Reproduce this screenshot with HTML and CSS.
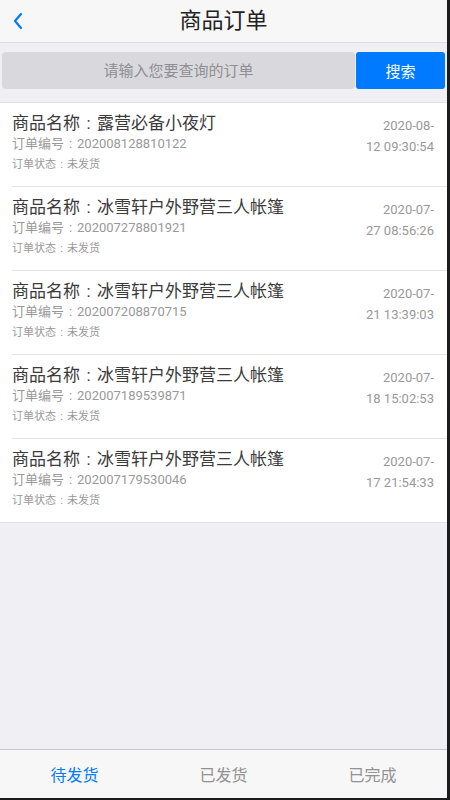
FILE: index.html
```html
<!DOCTYPE html>
<html lang="zh-CN">
<head>
    <meta charset="UTF-8">
    <meta name="viewport" content="width=device-width, initial-scale=1.0">
    <title>商品订单</title>
    <link rel="stylesheet" href="styles.css">
</head>
<body>
    <div id="screen">
        <header class="nav-bar">
            <a class="back" href="#">
                <svg width="12" height="18" viewBox="0 0 12 18"><path d="M9 2 L3 9 L9 16" fill="none" stroke="#007aff" stroke-width="2.2" stroke-linecap="round" stroke-linejoin="round"/></svg>
            </a>
            <h1>商品订单</h1>
        </header>

        <div class="search-bar">
            <input type="text" class="search-input" placeholder="请输入您要查询的订单">
            <button class="search-btn">搜索</button>
        </div>

        <div class="content">
            <ul class="order-list">
                <li class="order-item">
                    <div class="order-info">
                        <div class="order-name">商品名称<span class="colon">:</span>露营必备小夜灯</div>
                        <div class="order-no">订单编号<span class="colon">:</span>202008128810122</div>
                        <div class="order-status">订单状态<span class="colon">:</span>未发货</div>
                    </div>
                    <div class="order-time">2020-08-<br>12 09:30:54</div>
                </li>
                <li class="order-item">
                    <div class="order-info">
                        <div class="order-name">商品名称<span class="colon">:</span>冰雪轩户外野营三人帐篷</div>
                        <div class="order-no">订单编号<span class="colon">:</span>202007278801921</div>
                        <div class="order-status">订单状态<span class="colon">:</span>未发货</div>
                    </div>
                    <div class="order-time">2020-07-<br>27 08:56:26</div>
                </li>
                <li class="order-item">
                    <div class="order-info">
                        <div class="order-name">商品名称<span class="colon">:</span>冰雪轩户外野营三人帐篷</div>
                        <div class="order-no">订单编号<span class="colon">:</span>202007208870715</div>
                        <div class="order-status">订单状态<span class="colon">:</span>未发货</div>
                    </div>
                    <div class="order-time">2020-07-<br>21 13:39:03</div>
                </li>
                <li class="order-item">
                    <div class="order-info">
                        <div class="order-name">商品名称<span class="colon">:</span>冰雪轩户外野营三人帐篷</div>
                        <div class="order-no">订单编号<span class="colon">:</span>202007189539871</div>
                        <div class="order-status">订单状态<span class="colon">:</span>未发货</div>
                    </div>
                    <div class="order-time">2020-07-<br>18 15:02:53</div>
                </li>
                <li class="order-item">
                    <div class="order-info">
                        <div class="order-name">商品名称<span class="colon">:</span>冰雪轩户外野营三人帐篷</div>
                        <div class="order-no">订单编号<span class="colon">:</span>202007179530046</div>
                        <div class="order-status">订单状态<span class="colon">:</span>未发货</div>
                    </div>
                    <div class="order-time">2020-07-<br>17 21:54:33</div>
                </li>
            </ul>
        </div>

        <nav class="tab-bar">
            <a class="tab active" href="#">待发货</a>
            <a class="tab" href="#">已发货</a>
            <a class="tab" href="#">已完成</a>
        </nav>
    </div>
</body>
</html>
```

FILE: styles.css
```css
body {
    margin: 0;
    font-family: Roboto, "Noto Sans CJK SC", sans-serif;
    background-color: #111;
}

#screen {
    width: 450px;
    height: 800px;
    box-sizing: border-box;
    border-right: 3px solid #1c1c1e;
    border-bottom: 2px solid #1c1c1e;
    background-color: #efeff4;
    display: flex;
    flex-direction: column;
}

.nav-bar {
    height: 42px;
    background-color: #f7f7f7;
    border-bottom: 1px solid #dedede;
    display: flex;
    align-items: center;
    justify-content: center;
    position: relative;
    flex-shrink: 0;
}

.nav-bar h1 {
    margin: 0;
    font-size: 22px;
    font-weight: normal;
    color: #222;
    line-height: 1;
}

.back {
    position: absolute;
    left: 12px;
    top: 12px;
    display: flex;
}

.search-bar {
    display: flex;
    gap: 1px;
    padding: 9px 2px 13px 2px;
    border-bottom: 1px solid #e0e0e4;
    flex-shrink: 0;
}

.search-input {
    flex: 1;
    height: 37px;
    border: none;
    border-radius: 4px;
    background-color: #d9d9dd;
    font-family: inherit;
    font-size: 15px;
    text-align: center;
    padding: 0;
    outline: none;
}

.search-input::placeholder {
    color: #8e8e93;
}

.search-btn {
    width: 89px;
    height: 37px;
    border: none;
    border-radius: 3px;
    background-color: #007aff;
    color: #fff;
    font-family: inherit;
    font-size: 15px;
}

.content {
    flex: 1;
}

.order-list {
    list-style: none;
    margin: 0;
    padding: 0;
    background-color: #fff;
    border-bottom: 1px solid #e4e4e8;
}

.order-item {
    display: flex;
    justify-content: space-between;
    margin-left: 12px;
    padding: 9px 13px 10px 0;
    border-bottom: 1px solid #e5e5e5;
}

.order-item:last-child {
    border-bottom: none;
}

/* full-width colon, centred in its cell */
.colon {
    display: inline-block;
    width: 1em;
    text-align: center;
}

.order-name {
    font-size: 17px;
    line-height: 22px;
    color: #3a3a3a;
}

.order-no {
    font-size: 13px;
    line-height: 20px;
    color: #999;
}

.order-status {
    font-size: 11px;
    line-height: 22px;
    color: #999;
}

.order-time {
    padding-top: 3px;
    font-size: 13px;
    line-height: 21px;
    color: #999;
    text-align: right;
}

.tab-bar {
    height: 48px;
    background-color: #f7f7f7;
    border-top: 1px solid #c8c7cc;
    display: grid;
    grid-template-columns: 1fr 1fr 1fr;
    flex-shrink: 0;
}

.tab {
    display: flex;
    align-items: center;
    justify-content: center;
    font-size: 16px;
    color: #929292;
    text-decoration: none;
}

.tab.active {
    color: #007aff;
}
```
